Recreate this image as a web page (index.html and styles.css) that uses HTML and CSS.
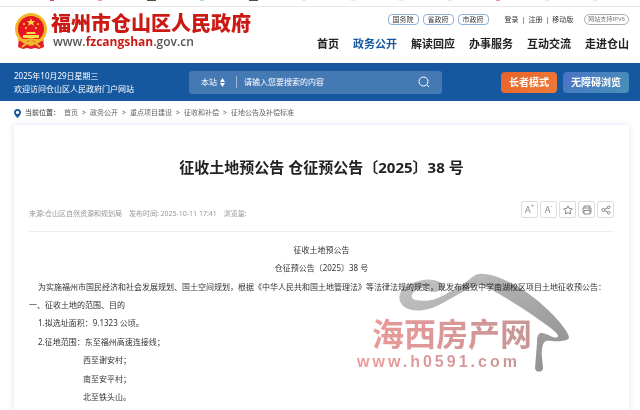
FILE: index.html
```html
<!DOCTYPE html>
<html lang="zh-CN">
<head>
    <meta charset="UTF-8">
    <meta name="viewport" content="width=device-width, initial-scale=1.0">
    <title>征收土地预公告 仓征预公告〔2025〕38 号</title>
    <link rel="stylesheet" href="styles.css">
</head>
<body>
    <div class="bookmarks">
        <i class="red"></i><i class="salmon"></i><i class="dark"></i><i class="mint"></i><i class="dark"></i><i></i><i></i><i></i><i></i><i class="salmon"></i><i></i><i></i>
    </div>

    <header class="header">
        <a href="#" class="brand">
            <svg class="emblem" viewBox="0 0 34 37" aria-hidden="true">
                <path fill="#e3202a" d="M5 25 4 34l5 2 4-1 4 1 4-1 4 1 5-2-1-9z"/>
                <circle cx="17" cy="16" r="16" fill="#f0b92c"/>
                <circle cx="17" cy="16" r="13" fill="#e8151f"/>
                <path fill="#f9dc4a" d="m17 5 1 3h3l-2 2 1 3-3-2-3 2 1-3-2-2h3z"/>
                <g fill="#f9dc4a">
                    <circle cx="10" cy="11" r="1"/>
                    <circle cx="12" cy="15" r="1"/>
                    <circle cx="22" cy="15" r="1"/>
                    <circle cx="24" cy="11" r="1"/>
                    <path d="M13 19h8l1 2h-10zM9 22h16v3H9z"/>
                </g>
                <path fill="none" stroke="#f0b92c" stroke-width="2" d="M4 27h9l4-1 4 1h9M8 34l5-4M26 34l-5-4"/>
                <circle cx="17" cy="30" r="3" fill="#f0b92c"/>
            </svg>
            <span class="brand-text">
                <strong class="brand-name">福州市仓山区人民政府</strong>
                <span class="brand-url">www.<b>fzcangshan</b>.gov.cn</span>
            </span>
        </a>
        <div class="header-right">
            <div class="top-links">
                <div class="pills">
                    <a href="#" class="pill">国务院</a>
                    <a href="#" class="pill">省政府</a>
                    <a href="#" class="pill">市政府</a>
                </div>
                <div class="account">
                    <a href="#">登录</a><span>|</span><a href="#">注册</a><span>|</span><a href="#">移动版</a>
                </div>
                <span class="pill ipv6">网站支持IPV6</span>
            </div>
            <nav class="nav">
                <a href="#">首页</a>
                <a href="#" class="active">政务公开</a>
                <a href="#">解读回应</a>
                <a href="#">办事服务</a>
                <a href="#">互动交流</a>
                <a href="#">走进仓山</a>
            </nav>
        </div>
    </header>

    <div class="banner">
        <div class="welcome">
            <p>2025年10月29日星期三</p>
            <p>欢迎访问仓山区人民政府门户网站</p>
        </div>
        <form class="search">
            <button type="button" class="scope">本站
                <svg viewBox="0 0 5 9" aria-hidden="true"><path d="M0 4 2.500 0 5 4zM0 5h5L2.500 9z"/></svg>
            </button>
            <input type="text" placeholder="请输入您要搜索的内容" aria-label="搜索">
            <button type="submit" class="search-btn" aria-label="搜索">
                <svg viewBox="0 0 12 12"><circle cx="5.500" cy="5.500" r="4.500"/><path d="m9 9 2 2"/></svg>
            </button>
        </form>
        <div class="modes">
            <button type="button" class="mode elder">长者模式</button>
            <button type="button" class="mode barrier">无障碍浏览</button>
        </div>
    </div>

    <nav class="crumbs">
        <svg viewBox="0 0 7 9" aria-hidden="true"><path fill="#1658a0" fill-rule="evenodd" d="M3.500 0A3.300 3.300 0 0 1 7 3.400C7 5.500 4.500 7.800 3.500 9 2.500 7.800 0 5.500 0 3.400A3.300 3.300 0 0 1 3.500 0zm0 1.700a1.700 1.700 0 1 0 0 3.400 1.700 1.700 0 0 0 0-3.400z"/></svg>
        <span class="here">当前位置：</span>
        <a href="#">首页</a><span>&gt;</span>
        <a href="#">政务公开</a><span>&gt;</span>
        <a href="#">重点项目建设</a><span>&gt;</span>
        <a href="#">征收和补偿</a><span>&gt;</span>
        <a href="#">征地公告及补偿标准</a>
    </nav>

    <main class="card">
        <h1>征收土地预公告 仓征预公告〔2025〕38 号</h1>
        <div class="meta">
            <div class="info">
                <span>来源:仓山区自然资源和规划局</span>
                <span>发布时间: 2025-10-11 17:41</span>
                <span>浏览量:</span>
            </div>
            <div class="tools">
                <button type="button" aria-label="放大字体">A<sup>+</sup></button>
                <button type="button" aria-label="缩小字体">A<sup>-</sup></button>
                <button type="button" aria-label="收藏"><svg viewBox="0 0 10 10"><path d="m5 .8 1.300 2.700 3 .4-2.200 2.100.5 3L5 7.600 2.400 9l.5-3L.7 3.900l3-.4z"/></svg></button>
                <button type="button" aria-label="打印"><svg viewBox="0 0 10 10"><path d="M2 3V1h6v2M2 7.500H1V3h8v4.500H8M2 5.500h6V9H2zM6.500 4.200H8"/></svg></button>
                <button type="button" aria-label="分享"><svg viewBox="0 0 10 10"><circle cx="2.300" cy="5" r="1.500"/><circle cx="7.700" cy="2.300" r="1.300"/><circle cx="7.700" cy="7.700" r="1.300"/><path d="m3.700 4.300 2.800-1.400M3.700 5.700l2.800 1.400"/></svg></button>
            </div>
        </div>

        <article class="content">
            <div class="heading">
                <p>征收土地预公告</p>
                <p>仓征预公告〔2025〕38 号</p>
            </div>
            <div>
                <p class="indent">为实施福州市国民经济和社会发展规划、国土空间规划，根据《中华人民共和国土地管理法》等法律法规的规定，现发布格致中学南湖校区项目土地征收预公告：</p>
                <p>一、征收土地的范围、目的</p>
                <p class="indent">1.拟选址面积：9.1323 公顷。</p>
            </div>
            <div>
                <p class="indent">2.征地范围：东至福州高速连接线；</p>
                <p class="bounds">西至谢安村；</p>
            </div>
            <div>
                <p class="bounds">南至安平村；</p>
                <p class="bounds">北至铁头山。</p>
            </div>
        </article>
    </main>

    <div class="watermark">
        <svg viewBox="0 0 640 300" aria-hidden="true">
            <defs>
                <linearGradient id="roof" x1="0" x2="1" y1="0" y2="1">
                    <stop offset="0" stop-color="#c6c6c6"/>
                    <stop offset="1" stop-color="#8d8d8d"/>
                </linearGradient>
            </defs>
            <path fill="url(#roof)" d="M375 2C352 0 340 20 320 32L262 66C235 82 205 86 180 82 155 76 164 60 180 50 200 42 210 42 218 54 232 62 252 54 264 42 256 22 222 14 190 22 155 30 126 48 127 75 130 104 160 116 195 112 240 106 278 76 320 55 345 42 362 28 382 39 430 62 515 115 575 160 592 174 608 184 603 192 592 200 570 178 552 180 542 182 541 196 541 208L535 284C534 300 560 300 559 284L555 245C556 205 564 202 584 204 608 206 633 204 637 194 638 180 600 132 560 98 510 52 430 4 375 2Z"/>
        </svg>
        <span class="wm-name">海西房产网</span>
        <span class="wm-url">www.h0591.com</span>
    </div>
</body>
</html>
```

FILE: styles.css
```css
* {
    box-sizing: border-box;
}

body {
    margin: 0;
    min-height: 100vh;
    display: flex;
    flex-direction: column;
    position: relative;
    background: #fff;
    color: #333;
    font-family: "Noto Sans", "Noto Sans CJK SC", sans-serif;
    font-size: 8px;
    line-height: 18px;
}

p {
    margin: 0;
}

a {
    color: inherit;
    text-decoration: none;
}

button {
    border: 0;
    padding: 0;
    background: none;
    color: inherit;
    font: inherit;
}

svg {
    display: block;
}

/* bottom edge of the browser's bookmarks bar */
.bookmarks {
    display: flex;
    justify-content: space-between;
    height: 7px;
    padding: 0 43px 0 50px;
    border-bottom: 1px solid #e8e8e8;
}

.bookmarks i {
    width: 4px;
    height: 1px;
    background: #e6e6e6;
}

.bookmarks .red {
    background: #e0455a;
}

.bookmarks .salmon {
    background: #f39a96;
}

.bookmarks .dark {
    width: 9px;
    background: #5b4c3a;
}

.bookmarks .mint {
    background: #a5e3d3;
}

.header {
    display: flex;
    justify-content: space-between;
    height: 56px;
    padding: 6px 11px 0 14px;
}

.brand {
    display: flex;
    gap: 3px;
}

.emblem {
    width: 34px;
    height: 37px;
}

.brand-text {
    display: flex;
    flex-direction: column;
}

.brand-name {
    color: #cb1a14;
    font-size: 20px;
    font-weight: 900;
    line-height: 21px;
}

.brand-url {
    padding-left: 2px;
    color: #555;
    font-family: "Open Sans", sans-serif;
    font-size: 12px;
    font-weight: 600;
    line-height: 15px;
}

.brand-url b {
    color: #cb1a14;
    font-weight: 700;
}

.header-right {
    display: flex;
    flex-direction: column;
    align-items: flex-end;
    gap: 10px;
}

.top-links {
    display: flex;
    align-items: center;
    padding-top: 1px;
    font-size: 7px;
    line-height: 9px;
}

.pills {
    display: flex;
    gap: 4px;
}

.pill {
    padding: 0 4px;
    border: 1px solid #8fb0d8;
    border-radius: 4px;
}

.account {
    display: flex;
    gap: 3px;
    margin: 0 11px 0 16px;
}

.ipv6 {
    padding: 0 3px;
    border-color: #aaa;
    border-radius: 6px;
    color: #777;
    font-size: 6px;
}

.nav {
    display: flex;
    gap: 14px;
    color: #222;
    font-size: 11px;
    font-weight: 700;
}

.nav .active {
    color: #1658a0;
}

.banner {
    display: flex;
    align-items: center;
    height: 38px;
    padding: 0 11px 0 14px;
    background: #1658a0;
    color: #fff;
}

.welcome {
    width: 175px;
    line-height: 13px;
    white-space: nowrap;
}

.search {
    display: flex;
    align-items: center;
    flex: 1;
    height: 23px;
    padding: 0 12px;
    border-radius: 3px;
    background: #4579b4;
}

.scope {
    display: flex;
    align-items: center;
    gap: 3px;
    padding-right: 11px;
    border-right: 1px solid #a2bcda;
    line-height: 12px;
}

.scope svg {
    width: 5px;
    height: 9px;
    fill: #fff;
}

.search input {
    flex: 1;
    min-width: 0;
    padding: 0 7px;
    border: 0;
    outline: 0;
    background: none;
    color: #fff;
    font: inherit;
}

.search input::placeholder {
    color: #fff;
}

.search-btn svg {
    width: 12px;
    height: 12px;
    fill: none;
    stroke: #fff;
}

.modes {
    display: flex;
    gap: 6px;
    margin-left: 59px;
}

.mode {
    height: 21px;
    padding: 0 8px;
    border-radius: 4px;
    font-size: 10px;
    font-weight: 700;
}

.elder {
    background: linear-gradient(135deg, #e8622c, #ef7b3a);
}

.barrier {
    background: linear-gradient(135deg, #4a72c4, #4792b8);
}

.crumbs {
    display: flex;
    align-items: center;
    gap: 4px;
    height: 24px;
    padding: 0 14px;
    color: #666;
    font-size: 7px;
}

.crumbs svg {
    width: 7px;
    height: 9px;
}

.here {
    color: #333;
}

.card {
    flex: 1;
    margin: 0 11px 0 14px;
    padding: 0 15px;
    background: #fff;
    box-shadow: 0 0 6px #d9e1f4;
}

h1 {
    margin: 0;
    padding: 32px 0 24px;
    color: #222;
    font-size: 15px;
    line-height: 20px;
    text-align: center;
}

.meta {
    display: flex;
    justify-content: space-between;
    height: 31px;
    border-bottom: 1px solid #eee;
    color: #999;
    font-size: 7px;
}

.info {
    display: flex;
    gap: 7px;
    padding-top: 4px;
}

.tools {
    display: flex;
    gap: 2px;
}

.tools button {
    display: flex;
    align-items: center;
    justify-content: center;
    width: 17px;
    height: 17px;
    border: 1px solid #ddd;
    border-radius: 2px;
    color: #888;
    font-size: 9px;
    line-height: 15px;
}

.tools sup {
    font-size: 6px;
    line-height: 8px;
    align-self: flex-start;
}

.tools svg {
    width: 10px;
    height: 10px;
    fill: none;
    stroke: #888;
    stroke-width: 1;
}

.content {
    display: flex;
    flex-direction: column;
    gap: 1px;
    padding-top: 9px;
}

.heading {
    text-align: center;
}

.indent {
    padding-left: 9px;
}

.bounds {
    padding-left: 54px;
}

/* site watermark lies over the notice */
.watermark {
    position: absolute;
    top: 273px;
    left: 357px;
    display: flex;
    flex-direction: column;
    width: 213px;
    height: 100px;
    padding-top: 42px;
    pointer-events: none;
    mix-blend-mode: multiply;
}

.watermark svg {
    position: absolute;
    inset: 0;
    width: 100%;
    height: 100%;
}

.wm-name,
.wm-url {
    color: transparent;
    background: linear-gradient(90deg, #ee9999, #c79696);
    background-clip: text;
    font-weight: 700;
}

.wm-name {
    align-self: flex-start;
    padding-left: 15px;
    font-size: 32px;
    line-height: 38px;
}

.wm-url {
    align-self: flex-start;
    font-family: "Liberation Sans", sans-serif;
    font-size: 16px;
    letter-spacing: 3px;
    line-height: 18px;
}
```
